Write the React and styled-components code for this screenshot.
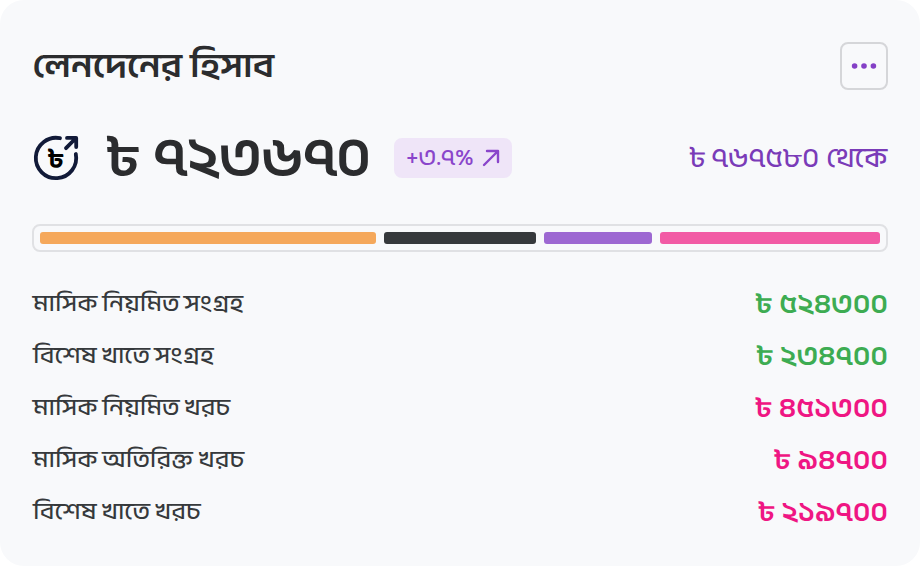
import styled, { createGlobalStyle } from 'styled-components';

const GlobalStyle = createGlobalStyle`
  * {
    box-sizing: border-box;
  }
  body {
    margin: 0;
    background: #fff;
    font-family: 'Anek Bangla', 'Hind Siliguri', 'Noto Sans Bengali', 'Noto Sans', sans-serif;
    color: #36393c;
  }
`;

const Card = styled.main`
  width: 920px;
  height: 566px;
  padding: 42px 32px 0;
  border-radius: 24px;
  background: #f8f9fb;
`;

const Header = styled.header`
  display: flex;
  align-items: center;
  justify-content: space-between;
  height: 48px;
`;

const Title = styled.h1`
  margin: 0;
  font-size: 35px;
  line-height: 48px;
  font-weight: 600;
  word-spacing: 2px;
  white-space: nowrap;
  color: #2b2c2e;
`;

const MenuButton = styled.button`
  display: flex;
  align-items: center;
  justify-content: center;
  width: 48px;
  height: 48px;
  padding: 0;
  border: 2px solid #d5d6d9;
  border-radius: 8px;
  background: transparent;
`;

const Summary = styled.section`
  display: flex;
  align-items: center;
  height: 60px;
  margin-top: 38px;
`;

const Money = styled.span`
  font-size: 28px;
  font-weight: 600;
  line-height: 40px;
  letter-spacing: 0.2px;
  word-spacing: 3px;
  white-space: nowrap;
  color: ${props => props.$color || '#2b2c2e'};
`;

const Balance = styled(Money)`
  margin-left: 28px;
  font-size: 56px;
  line-height: 60px;
  letter-spacing: -0.75px;
  word-spacing: 7px;
`;

const Badge = styled.div`
  display: flex;
  align-items: center;
  justify-content: space-between;
  width: 118px;
  height: 40px;
  margin-left: 24px;
  padding: 0 12px;
  border-radius: 8px;
  background: #efe5f8;
  color: #8a45cb;
  font-size: 24px;
  font-weight: 500;
  line-height: 40px;
  white-space: nowrap;
`;

const Previous = styled(Money)`
  margin-left: auto;
  padding-right: 1px;
  font-weight: 500;
  letter-spacing: -0.1px;
  word-spacing: 2px;
`;

const Track = styled.div`
  display: flex;
  gap: 8px;
  height: 28px;
  margin-top: 36px;
  padding: 6px;
  border: 2px solid #e0e1e4;
  border-radius: 8px;
`;

const Segment = styled.div`
  flex: ${props => props.$share} 0 0;
  border-radius: 3px;
  background: ${props => props.$color};
`;

const List = styled.ul`
  margin: 26px 0 0;
  padding: 0;
  list-style: none;
`;

const Row = styled.li`
  display: flex;
  align-items: center;
  justify-content: space-between;
  height: 52px;
  padding-left: 1px;
`;

const Label = styled.span`
  font-size: 24.3px;
  font-weight: 500;
  line-height: 40px;
  word-spacing: 0.8px;
`;

const segments = [
  { color: '#f5a85b', share: 336 },
  { color: '#36393c', share: 152 },
  { color: '#9d68d2', share: 108 },
  { color: '#f25ba5', share: 220 },
];

const rows = [
  { label: 'মাসিক নিয়মিত সংগ্রহ', amount: '৫২৪৩০০', income: true },
  { label: 'বিশেষ খাতে সংগ্রহ', amount: '২৩৪৭০০', income: true },
  { label: 'মাসিক নিয়মিত খরচ', amount: '৪৫১৩০০' },
  { label: 'মাসিক অতিরিক্ত খরচ', amount: '৯৪৭০০' },
  { label: 'বিশেষ খাতে খরচ', amount: '২১৯৭০০' },
];

const CoinIcon = () => (
  <svg width="48" height="48" viewBox="0 0 48 48" fill="none" stroke="#111a38" strokeWidth="3.8" strokeLinecap="round" strokeLinejoin="round">
    <path d="M28 4.2A20.2 20.2 0 1 0 43.8 20" />
    <path d="M34 14.2 44 4M35 3.9h9.2v9.2" />
    <text x="23.5" y="33" textAnchor="middle" fontSize="26" fontWeight="400" fill="#000" stroke="#000" strokeWidth="1.6">৳</text>
  </svg>
);

const App = () => (
  <>
    <GlobalStyle />
    <Card>
      <Header>
        <Title>লেনদেনের হিসাব</Title>
        <MenuButton aria-label="মেনু">
          <svg width="28" height="8" viewBox="0 0 28 8" fill="#8440c6">
            <circle cx="4.6" cy="4" r="2.8" />
            <circle cx="14" cy="4" r="2.8" />
            <circle cx="23.4" cy="4" r="2.8" />
          </svg>
        </MenuButton>
      </Header>
      <Summary>
        <CoinIcon />
        <Balance>৳ ৭২৩৬৭০</Balance>
        <Badge>
          <span>+৩.৭%</span>
          <svg width="18" height="18" viewBox="0 0 18 18" fill="none" stroke="currentColor" strokeWidth="2.4" strokeLinecap="round" strokeLinejoin="round">
            <path d="M2 16 16 2M5 2h11v11" />
          </svg>
        </Badge>
        <Previous $color="#7a3bb8">৳ ৭৬৭৫৮০ থেকে</Previous>
      </Summary>
      <Track>
        {segments.map(s => (
          <Segment key={s.color} $share={s.share} $color={s.color} />
        ))}
      </Track>
      <List>
        {rows.map(row => (
          <Row key={row.label}>
            <Label>{row.label}</Label>
            <Money $color={row.income ? '#3dac52' : '#ef1683'}>৳ {row.amount}</Money>
          </Row>
        ))}
      </List>
    </Card>
  </>
);

export default App;
